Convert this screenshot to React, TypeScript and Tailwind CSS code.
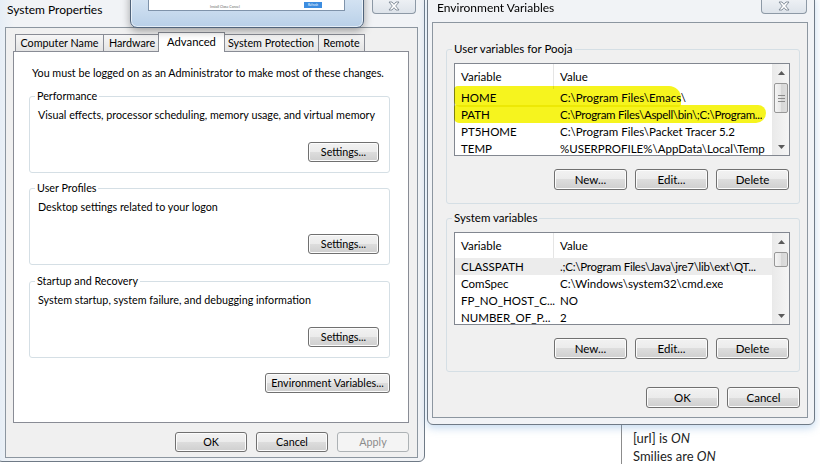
import React from "react";

// Win7-style push button
function WinButton({
  children,
  className = "",
  disabled = false,
}: {
  children: React.ReactNode;
  className?: string;
  disabled?: boolean;
}) {
  return (
    <div
      className={`flex shrink-0 items-center justify-center rounded-[3px] border ${
        disabled
          ? "border-[#adb2b5] bg-[#f4f4f4] text-[#8b8b8b]"
          : "border-[#707070] bg-[linear-gradient(#f2f2f2_0%,#ebebeb_50%,#dddddd_50%,#cfcfcf_100%)] text-black shadow-[inset_0_0_0_1px_#fcfcfc]"
      } ${className}`}
    >
      {children}
    </div>
  );
}

function CloseButton({ className = "" }: { className?: string }) {
  return (
    <div
      className={`flex h-[19px] items-center justify-center rounded-b-[4px] border border-t-0 border-[#8d99a6] bg-[linear-gradient(#f3f5f8,#dde3ea)] pt-[3px] ${className}`}
    >
      <svg width="12" height="10" viewBox="0 0 12 10">
        <path
          d="M1 1 L4 1 L6 3.3 L8 1 L11 1 L7.7 5 L11 9 L8 9 L6 6.7 L4 9 L1 9 L4.3 5 Z"
          fill="#ffffff"
          stroke="#7c8793"
          strokeWidth="0.9"
          strokeLinejoin="round"
        />
      </svg>
    </div>
  );
}

function Group({
  title,
  children,
  className = "",
  bg = "bg-white",
}: {
  title: string;
  children: React.ReactNode;
  className?: string;
  bg?: string;
}) {
  return (
    <fieldset className={`rounded-[3px] border border-[#d5dfe5] ${bg} ${className}`}>
      <legend className="ml-[5px] px-[2px] leading-[16px]">{title}</legend>
      {children}
    </fieldset>
  );
}

function SettingsGroup({ title, text, className = "" }: { title: string; text: string; className?: string }) {
  return (
    <Group title={title} className={className}>
      <div className="pl-[8px] pt-[3px] leading-[16px]">{text}</div>
      <div className="flex justify-end pb-[10px] pr-[10px] pt-[19px]">
        <WinButton className="h-[20px] w-[71px]">Settings...</WinButton>
      </div>
    </Group>
  );
}

function Arrow({ up }: { up?: boolean }) {
  return (
    <div className="flex h-[17px] items-center justify-center">
      <svg width="7" height="4" viewBox="0 0 7 4">
        <path d={up ? "M0 4 L3.5 0 L7 4 Z" : "M0 0 L3.5 4 L7 0 Z"} fill="#5a5a5a" />
      </svg>
    </div>
  );
}

type Row = { name: string; value: string; selected?: boolean; tight?: string };

function ListView({
  rows,
  thumbClass,
  grip,
  children,
}: {
  rows: Row[];
  thumbClass: string;
  grip?: boolean;
  children?: React.ReactNode;
}) {
  return (
    <div className="relative ml-[7px] mt-[6px] flex h-[93px] w-[336px] border border-[#828790] bg-white">
      <div className="flex min-w-0 flex-1 flex-col">
        <div className="flex h-[25px] shrink-0 items-center">
          <div className="flex h-full w-[99px] shrink-0 items-center border-r border-[#e5e5e5] pl-[6px]">Variable</div>
          <div className="pl-[6px]">Value</div>
        </div>
        {rows.map((r) => (
          <div
            key={r.name}
            className={`flex h-[17px] shrink-0 items-center whitespace-nowrap ${r.selected ? "bg-[#ececec]" : ""}`}
          >
            <div className="w-[99px] shrink-0 pl-[6px]">{r.name}</div>
            <div className={`min-w-0 overflow-hidden pl-[6px] ${r.tight ?? ""}`}>{r.value}</div>
          </div>
        ))}
      </div>
      <div className="flex w-[17px] shrink-0 flex-col border-l border-[#e9e9e9] bg-[linear-gradient(90deg,#eaeaea,#f5f5f5)]">
        <Arrow up />
        <div
          className={`mx-[1px] mt-[2px] flex flex-col items-center justify-center gap-[2px] rounded-[2px] border border-[#979797] bg-[linear-gradient(90deg,#f4f4f4,#e6e6e6_50%,#d6d6d6_50%,#dedede)] ${thumbClass}`}
        >
          {grip && (
            <>
              <div className="h-[1px] w-[7px] bg-[#8a8a8a]" />
              <div className="h-[1px] w-[7px] bg-[#8a8a8a]" />
              <div className="h-[1px] w-[7px] bg-[#8a8a8a]" />
            </>
          )}
        </div>
        <div className="flex-1" />
        <Arrow />
      </div>
      {children}
    </div>
  );
}

function VarButtons() {
  return (
    <div className="mt-[13px] flex justify-end gap-[8px] pr-[10px]">
      <WinButton className="h-[21px] w-[73px]">New...</WinButton>
      <WinButton className="h-[21px] w-[73px]">Edit...</WinButton>
      <WinButton className="h-[21px] w-[73px]">Delete</WinButton>
    </div>
  );
}

const tabBase =
  "flex h-[17px] shrink-0 items-center justify-center border-l border-t border-[#898c95] bg-[linear-gradient(#f6f6f6,#e4e4e4)]";

export default function App() {
  return (
    <div className="relative h-[464px] w-[820px] overflow-hidden bg-white font-['Lato','Liberation_Sans',sans-serif] text-[11.5px] text-black">
      {/* page behind the windows */}
      <div className="absolute left-[621px] top-[425px] flex h-[40px] flex-col border-l border-[#8c8c8c] pl-[11px] pt-[4px] font-['Lato',sans-serif] text-[13px] leading-[18px] text-[#222]">
        <div>
          [url] is <i>ON</i>
        </div>
        <div>
          Smilies are <i>ON</i>
        </div>
      </div>

      {/* System Properties */}
      <div className="absolute left-[-4px] top-[-6px] flex h-[468px] w-[429px] flex-col rounded-[6px] border border-[#6f7a86] bg-[linear-gradient(90deg,#e4edf6,#f1f3f6_4%,#f1f3f6)] pb-[3px] pl-[8px] pr-[6px]">
        <div className="flex h-[32px] shrink-0 items-start justify-between pr-[2px]">
          <span className="ml-[2px] mt-[7px] text-[12px] leading-[16px]">System Properties</span>
          <CloseButton className="w-[44px]" />
        </div>
        <div className="flex flex-1 flex-col border border-[#8c96a0] bg-[#f0f0f0] pl-[7px] pr-[8px] text-[10.75px]">
          <div className="mt-[4px] flex h-[19px] items-end pl-[2px]">
            <div className={`${tabBase} w-[88px]`}>Computer Name</div>
            <div className={`${tabBase} w-[57px]`}>Hardware</div>
            <div className="relative z-10 -mx-[2px] -mb-[1px] flex h-[20px] w-[67px] shrink-0 justify-center border border-b-0 border-[#898c95] bg-white pt-[1px] text-[11.25px] leading-[16px]">
              Advanced
            </div>
            <div className={`${tabBase} w-[95px]`}>System Protection</div>
            <div className={`${tabBase} w-[47px] border-r`}>Remote</div>
          </div>
          <div className="flex h-[372px] flex-col border border-[#898c95] bg-white pl-[15px] pr-[18px] pt-[13px]">
            <div className="pl-[3px] leading-[16px]">
              You must be logged on as an Administrator to make most of these changes.
            </div>
            <SettingsGroup
              className="mt-[7px]"
              title="Performance"
              text="Visual effects, processor scheduling, memory usage, and virtual memory"
            />
            <SettingsGroup className="mt-[7px]" title="User Profiles" text="Desktop settings related to your logon" />
            <SettingsGroup
              className="mt-[8px]"
              title="Startup and Recovery"
              text="System startup, system failure, and debugging information"
            />
            <div className="mt-[15px] flex justify-end">
              <WinButton className="h-[20px] w-[125px]">Environment Variables...</WinButton>
            </div>
          </div>
          <div className="mt-[9px] flex justify-end gap-[9px]">
            <WinButton className="h-[20px] w-[72px]">OK</WinButton>
            <WinButton className="h-[20px] w-[72px]">Cancel</WinButton>
            <WinButton className="h-[20px] w-[72px]" disabled>
              Apply
            </WinButton>
          </div>
        </div>
      </div>

      {/* small popup on top */}
      <div className="absolute left-[130px] top-[-10px] z-20 flex h-[38px] w-[234px] rounded-b-[7px] border border-[#50637a] bg-[linear-gradient(#dbe8f5,#b9d0e8)] pl-[17px] shadow-[0_3px_8px_rgba(0,0,0,0.35),inset_0_0_0_1px_rgba(255,255,255,0.6)]">
        <div className="flex h-[20px] w-[197px] flex-col justify-end border border-[#7f93aa] bg-white px-[6px] pb-[1px]">
          <div className="mb-[3px] h-[1px] w-[112px] bg-[#d9d9d9]" />
          <div className="flex items-end">
            <span className="ml-[55px] text-[3.5px] leading-[4px] text-[#666]">Install Close Cancel</span>
            <span className="mb-[1px] ml-auto mr-[16px] flex h-[6px] w-[18px] items-center justify-center bg-[#3d8de0] text-[3px] text-white">
              Refresh
            </span>
          </div>
        </div>
      </div>

      {/* Environment Variables */}
      <div className="absolute left-[427px] top-[-6px] z-10 flex h-[431px] w-[388px] flex-col rounded-[6px] border border-[#6f7a86] bg-[#f1f3f6] pb-[6px] pl-[4px] pr-[6px] shadow-[0_3px_8px_rgba(90,150,210,0.35)]">
        <div className="flex h-[27px] shrink-0 items-start justify-between pr-[1px]">
          <span className="ml-[5px] mt-[5px] text-[12px] leading-[16px]">Environment Variables</span>
          <CloseButton className="w-[46px]" />
        </div>
        <div className="flex flex-1 flex-col border border-[#8c96a0] bg-[#f0f0f0] pl-[13px] pr-[7px] pt-[18px]">
          <Group title="User variables for Pooja" bg="bg-[#f0f0f0]" className="pb-[13px]">
            <ListView
              thumbClass="h-[30px]"
              grip
              rows={[
                { name: "HOME", value: "C:\\Program Files\\Emacs\\" },
                {
                  name: "PATH",
                  value: "C:\\Program Files\\Aspell\\bin\\;C:\\Program...",
                  tight: "tracking-[-0.3px]",
                },
                { name: "PT5HOME", value: "C:\\Program Files\\Packet Tracer 5.2" },
                { name: "TEMP", value: "%USERPROFILE%\\AppData\\Local\\Temp" },
              ]}
            >
              {/* highlighter marks */}
              <div className="pointer-events-none absolute left-[-1px] top-[22px] h-[21px] w-[227px] rounded-[4px_12px_3px_6px] bg-[#f6f41e] mix-blend-multiply" />
              <div className="pointer-events-none absolute left-[-1px] top-[41px] h-[18px] w-[312px] rounded-[2px_8px_10px_5px] bg-[#f6f41e] mix-blend-multiply" />
            </ListView>
            <VarButtons />
          </Group>
          <Group title="System variables" bg="bg-[#f0f0f0]" className="mt-[6px] pb-[12px]">
            <ListView
              thumbClass="h-[15px]"
              rows={[
                {
                  name: "CLASSPATH",
                  value: ".;C:\\Program Files\\Java\\jre7\\lib\\ext\\QT...",
                  selected: true,
                  tight: "tracking-[-0.25px]",
                },
                { name: "ComSpec", value: "C:\\Windows\\system32\\cmd.exe" },
                { name: "FP_NO_HOST_C...", value: "NO" },
                { name: "NUMBER_OF_P...", value: "2" },
              ]}
            />
            <VarButtons />
          </Group>
          <div className="mt-[15px] flex justify-end gap-[8px]">
            <WinButton className="h-[21px] w-[73px]">OK</WinButton>
            <WinButton className="h-[21px] w-[73px]">Cancel</WinButton>
          </div>
        </div>
      </div>
    </div>
  );
}
